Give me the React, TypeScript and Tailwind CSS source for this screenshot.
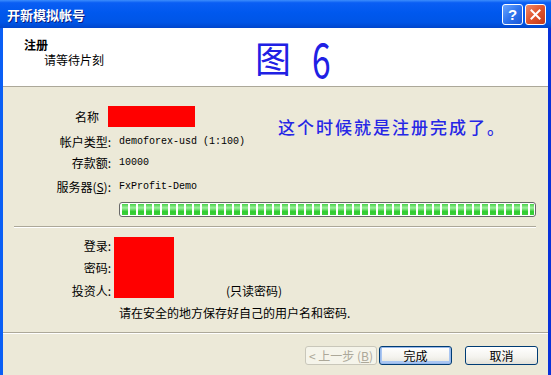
import React from "react";

const blocks = Array.from({ length: 54 }, (_, i) => i);

const XpButton = ({
  label,
  disabled,
  isDefault,
  className,
}: {
  label: React.ReactNode;
  disabled?: boolean;
  isDefault?: boolean;
  className?: string;
}) => {
  if (disabled) {
    return (
      <div
        className={`h-[19px] rounded-[3px] border border-[#c9c7ba] bg-[#f5f4ea] text-[#aca899] flex items-center justify-center text-[12px] ${className}`}
      >
        {label}
      </div>
    );
  }
  return (
    <div
      className={`h-[19px] rounded-[3px] border border-[#003c74] bg-[linear-gradient(to_bottom,#ffffff_0%,#f4f3ee_60%,#e3e1d8_100%)] text-black flex items-center justify-center text-[12px] ${
        isDefault ? "shadow-[inset_0_0_0_1px_#98b8ea,inset_0_-1px_0_2px_#a9c6f2]" : ""
      } ${className}`}
    >
      {label}
    </div>
  );
};

const App: React.FC = () => {
  return (
    <div className="w-[551px] h-[375px] flex flex-col overflow-hidden font-['Noto_Sans_CJK_SC','Noto_Sans',sans-serif] text-black">
      {/* title bar */}
      <div className="h-[28px] flex items-center bg-[linear-gradient(to_bottom,#3c8dfc_0%,#0a5ef4_10%,#0058ee_45%,#0055e6_80%,#0046cc_100%)]">
        <div className="ml-[7px] text-[13px] font-bold text-white leading-none [text-shadow:1px_1px_0_#0a1e80]">
          开新模拟帐号
        </div>
        <div className="ml-auto mr-[5px] flex gap-[2px]">
          <div className="w-[21px] h-[21px] rounded-[3px] border border-white bg-[linear-gradient(135deg,#6aa6ff_0%,#2f74ee_50%,#1a57d8_100%)] flex items-center justify-center text-white text-[15px] font-bold leading-none font-['Liberation_Sans',sans-serif]">
            ?
          </div>
          <div className="w-[21px] h-[21px] rounded-[3px] border border-white bg-[linear-gradient(135deg,#ee8a6a_0%,#e0542c_50%,#c2391a_100%)] flex items-center justify-center">
            <svg width="11" height="11" viewBox="0 0 11 11">
              <path d="M1.5 1.5 L9.5 9.5 M9.5 1.5 L1.5 9.5" stroke="white" strokeWidth="2" strokeLinecap="square" />
            </svg>
          </div>
        </div>
      </div>

      {/* body with window borders */}
      <div className="flex-1 flex flex-col border-l-[3px] border-r-[3px] border-l-[#0a5ff5] border-r-[#0831d9] bg-[#ece9d8]">
        {/* header */}
        <div className="h-[59px] bg-white border-b border-[#aca899] relative pl-[21px] pt-[9px]">
          <div className="text-[12px] font-bold leading-[16px]">注册</div>
          <div className="text-[12px] leading-[14px] pl-[20px]">请等待片刻</div>
          <div className="absolute left-[252px] top-[4px] flex items-center h-[50px] text-[#2020e4]">
            <span className="text-[36px] leading-[50px] font-normal">图</span>
            <span className="ml-[17px] inline-block text-[48px] leading-[50px] font-normal scale-x-[0.7]">6</span>
          </div>
        </div>

        {/* content */}
        <div className="relative flex flex-col text-[12px]">
          <div className="absolute left-[275px] top-[29px] text-[17px] leading-[22px] text-[#2626e6] font-medium tracking-[2px]">
            这个时候就是注册完成了。
          </div>

          <div className="mt-[19px] h-[21px] flex items-center">
            <div className="w-[105px] text-right pr-[9px]">名称</div>
            <div className="w-[87px] h-[21px] bg-[#ff0000]"></div>
          </div>
          <div className="mt-[4px] h-[21px] flex items-center">
            <div className="w-[108px] text-right">帐户类型:</div>
            <div className="ml-[8px] font-['Liberation_Mono',monospace] text-[10px]">demoforex-usd (1:100)</div>
          </div>
          <div className="h-[21px] flex items-center">
            <div className="w-[108px] text-right">存款额:</div>
            <div className="ml-[8px] font-['Liberation_Mono',monospace] text-[10px]">10000</div>
          </div>
          <div className="mt-[3px] h-[21px] flex items-center">
            <div className="w-[108px] text-right">
              服务器(<span className="underline">S</span>):
            </div>
            <div className="ml-[8px] font-['Liberation_Mono',monospace] text-[10px]">FxProfit-Demo</div>
          </div>

          {/* progress */}
          <div className="mt-[5px] ml-[116px] mr-[12px] h-[15px] rounded-[3px] border border-[#686868] bg-white p-[1px] pl-[2px] overflow-hidden">
            <div className="flex gap-[2px] h-full overflow-hidden">
              {blocks.map((b) => (
                <div
                  key={b}
                  className="w-[6px] h-full shrink-0 bg-[linear-gradient(to_bottom,#45d145_0%,#9ff09f_35%,#2ecb2e_70%,#3fd03f_100%)]"
                ></div>
              ))}
            </div>
          </div>

          <div className="mt-[9px] ml-[11px] mr-[12px] h-[2px] border-t border-[#aca899] border-b border-b-white"></div>

          {/* login block */}
          <div className="mt-[7px] grid grid-cols-[108px_3px_60px_52px_auto] grid-rows-[22px_22px_23px]">
            <div className="col-start-1 row-start-1 text-right flex items-center justify-end">登录:</div>
            <div className="col-start-1 row-start-2 text-right flex items-center justify-end">密码:</div>
            <div className="col-start-1 row-start-3 text-right flex items-center justify-end">投资人:</div>
            <div className="col-start-3 row-start-1 row-span-3 mt-[2px] h-[61px] bg-[#ff0000]"></div>
            <div className="col-start-5 row-start-3 flex items-center">(只读密码)</div>
          </div>

          <div className="mt-[1px] h-[20px] flex items-center pl-[116px]">请在安全的地方保存好自己的用户名和密码.</div>

          <div className="mt-[9px] h-[2px] border-t border-[#aca899] border-b border-b-white"></div>

          {/* buttons */}
          <div className="mt-[12px] flex justify-end pr-[10px]">
            <XpButton
              disabled
              className="w-[72px]"
              label={
                <span>
                  &lt; 上一步 (<span className="underline">B</span>)
                </span>
              }
            />
            <XpButton isDefault className="w-[73px] ml-[2px]" label="完成" />
            <XpButton className="w-[73px] ml-[13px]" label="取消" />
          </div>
        </div>
      </div>
    </div>
  );
};

export default App;
